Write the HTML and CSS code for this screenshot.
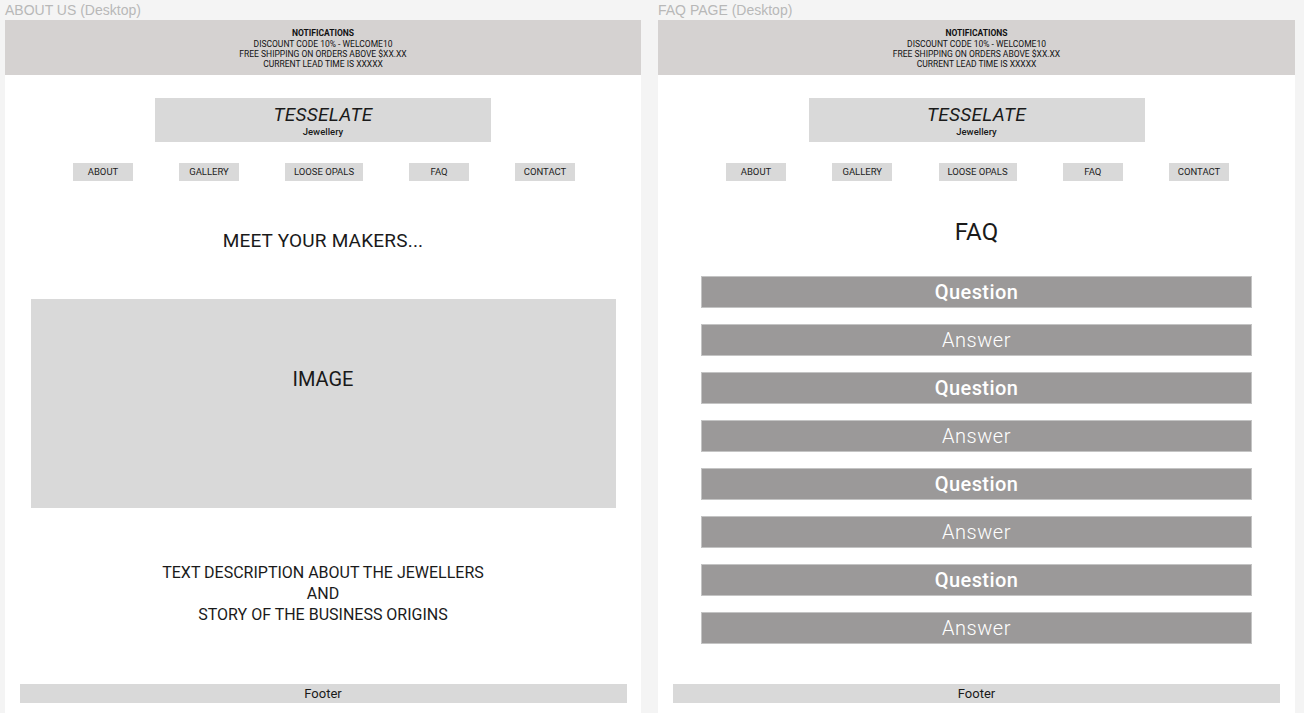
FILE: index.html
```html
<!DOCTYPE html>
<html lang="en">
<head>
<meta charset="utf-8">
<title>Tesselate wireframes</title>
<link rel="stylesheet" href="styles.css">
</head>
<body>
<div class="canvas">
  <section class="frame frame-left">
    <div class="frame-label">ABOUT US (Desktop)</div>
    <div class="page">
      <div class="notif">
        <div class="notif-title">NOTIFICATIONS</div>
        <div>DISCOUNT CODE 10% - WELCOME10</div>
        <div>FREE SHIPPING ON ORDERS ABOVE $XX.XX</div>
        <div>CURRENT LEAD TIME IS XXXXX</div>
      </div>
      <div class="logo">
        <div class="logo-name">TESSELATE</div>
        <div class="logo-sub">Jewellery</div>
      </div>
      <nav class="nav">
        <span class="nav-btn">ABOUT</span>
        <span class="nav-btn">GALLERY</span>
        <span class="nav-btn nav-wide">LOOSE OPALS</span>
        <span class="nav-btn">FAQ</span>
        <span class="nav-btn">CONTACT</span>
      </nav>
      <h1 class="makers">MEET YOUR MAKERS...</h1>
      <div class="image-box">IMAGE</div>
      <p class="desc">TEXT DESCRIPTION ABOUT THE JEWELLERS<br>AND<br>STORY OF THE BUSINESS ORIGINS</p>
      <footer class="footer">Footer</footer>
    </div>
  </section>
  <section class="frame frame-right">
    <div class="frame-label">FAQ PAGE (Desktop)</div>
    <div class="page">
      <div class="notif">
        <div class="notif-title">NOTIFICATIONS</div>
        <div>DISCOUNT CODE 10% - WELCOME10</div>
        <div>FREE SHIPPING ON ORDERS ABOVE $XX.XX</div>
        <div>CURRENT LEAD TIME IS XXXXX</div>
      </div>
      <div class="logo">
        <div class="logo-name">TESSELATE</div>
        <div class="logo-sub">Jewellery</div>
      </div>
      <nav class="nav">
        <span class="nav-btn">ABOUT</span>
        <span class="nav-btn">GALLERY</span>
        <span class="nav-btn nav-wide">LOOSE OPALS</span>
        <span class="nav-btn">FAQ</span>
        <span class="nav-btn">CONTACT</span>
      </nav>
      <h1 class="faq-title">FAQ</h1>
      <div class="faq-list">
        <div class="faq-bar question">Question</div>
        <div class="faq-bar answer">Answer</div>
        <div class="faq-bar question">Question</div>
        <div class="faq-bar answer">Answer</div>
        <div class="faq-bar question">Question</div>
        <div class="faq-bar answer">Answer</div>
        <div class="faq-bar question">Question</div>
        <div class="faq-bar answer">Answer</div>
      </div>
      <footer class="footer">Footer</footer>
    </div>
  </section>
</div>
</body>
</html>
```
FILE: styles.css
```css
* { box-sizing: border-box; }
html, body { margin: 0; padding: 0; }
body {
  background: #f4f4f4;
  font-family: Roboto, "Noto Sans", sans-serif;
  color: #1a1a1a;
  overflow: hidden;
}
.canvas {
  display: flex;
  gap: 17px;
  padding-left: 5px;
  height: 713px;
}
.frame {
  display: flex;
  flex-direction: column;
}
.frame-left { width: 636px; }
.frame-right { width: 637px; }
.frame-label {
  height: 20px;
  font-family: "Liberation Sans", Arial, sans-serif;
  font-size: 14px;
  line-height: 20px;
  color: #b8b8b8;
}
.page {
  background: #fff;
  height: 693px;
  display: flex;
  flex-direction: column;
  align-items: center;
}
.notif {
  width: 100%;
  height: 55px;
  background: #d5d2d1;
  display: flex;
  flex-direction: column;
  justify-content: center;
  align-items: center;
  font-size: 8.5px;
  line-height: 10.4px;
  color: #111;
  padding-top: 3px;
}
.notif-title { font-weight: 700; }
.logo {
  margin-top: 23px;
  width: 336px;
  height: 44px;
  background: #d9d9d9;
  display: flex;
  flex-direction: column;
  align-items: center;
  padding-top: 6px;
}
.logo-name {
  font-style: italic;
  font-size: 19px;
  line-height: 22px;
  letter-spacing: 0.3px;
}
.logo-sub {
  font-size: 9.5px;
  line-height: 11px;
  font-weight: 500;
}
.nav {
  margin-top: 21px;
  width: 100%;
  padding: 0 66px 0 68px;
  display: flex;
  justify-content: space-between;
}
.nav-btn {
  width: 60px;
  height: 18px;
  background: #d9d9d9;
  font-size: 9.5px;
  line-height: 18px;
  text-align: center;
  color: #222;
}
.nav-wide { width: 78px; }
.makers {
  margin: 49px 0 0;
  font-size: 19px;
  font-weight: 400;
  line-height: 22px;
  letter-spacing: 0.2px;
}
.image-box {
  margin-top: 47px;
  width: 585px;
  height: 209px;
  background: #d9d9d9;
  text-align: center;
  font-size: 20px;
  line-height: 22px;
  padding-top: 69px;
}
.desc {
  margin: 54px 0 0;
  text-align: center;
  font-size: 16px;
  line-height: 21px;
}
.footer {
  margin-top: auto;
  margin-bottom: 10px;
  width: 607px;
  height: 19px;
  background: #d9d9d9;
  text-align: center;
  font-size: 13px;
  line-height: 19px;
}
.faq-title {
  margin: 37px 0 0;
  font-size: 24px;
  font-weight: 400;
  line-height: 28px;
}
.faq-list {
  margin-top: 30px;
  width: 551px;
  display: flex;
  flex-direction: column;
  gap: 16px;
}
.faq-bar {
  height: 32px;
  background: #9b9999;
  border: 1px solid #c4c4c4;
  color: #fff;
  text-align: center;
  font-size: 20px;
  line-height: 30px;
}
.question { font-weight: 500; letter-spacing: 0.4px; }
.answer { font-weight: 300; letter-spacing: 0.5px; }
```
